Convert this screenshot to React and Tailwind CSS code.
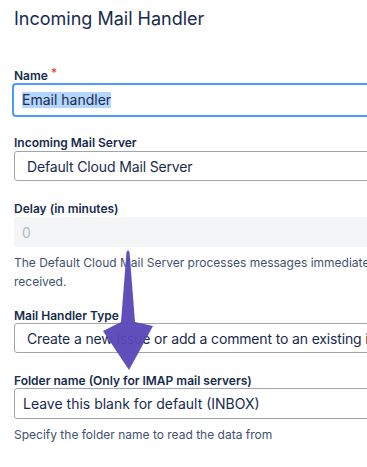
import React from 'react'

function Label({ children, required, className = '' }) {
  return (
    <div className={'flex items-start text-[12px] leading-[14px] font-semibold text-[#172b4d] ' + className}>
      <span>{children}</span>
      {required && <span className="ml-[3px] -mt-[3px] text-[#de350b] font-normal">*</span>}
    </div>
  )
}

function Arrow() {
  // big purple annotation arrow drawn over the form
  return (
    <svg className="absolute left-0 top-0 pointer-events-none" width="367" height="467" viewBox="0 0 367 467">
      <polygon
        points="128,250 129.5,252 135,322 153,326 129,370 103,331 121,322 126.5,252"
        fill="#5847b8"
        opacity="0.95"
      />
    </svg>
  )
}

export default function App() {
  return (
    <div className="relative w-[367px] h-[467px] overflow-hidden bg-white" style={{ fontFamily: 'Inter, "Liberation Sans", Arial, sans-serif' }}>
      <div className="w-[600px] pl-[14px]">
        <h1 className="pt-[5px] text-[18px] leading-[28px] text-[#172b4d] font-normal">Incoming Mail Handler</h1>

        <Label required className="mt-[36px]">Name</Label>
        <div className="-ml-[2px] h-[34px] border-2 border-[#4c9aff] rounded-[4px] flex items-center pl-[8px]">
          <span className="text-[14px] leading-[16px] text-[#172b4d] bg-[#b4d5fe]">Email handler</span>
        </div>

        <Label className="mt-[19px]">Incoming Mail Server</Label>
        <div className="mt-[1px] h-[30px] border border-[#a0a4ab] rounded-[3px] flex items-center pl-[12px] text-[14px] tracking-[-0.15px] text-[#172b4d]">
          Default Cloud Mail Server
        </div>

        <Label className="mt-[21px]">Delay (in minutes)</Label>
        <div className="mt-[1px] h-[30px] bg-[#f4f5f7] rounded-[3px] flex items-center pl-[8px] text-[14px] text-[#b3b9c4]">
          0
        </div>

        <p className="mt-[6px] text-[12px] leading-[19px] text-[#42526e] w-[480px]">
          The Default Cloud Mail Server processes messages immediately as they are received.
        </p>

        <Label className="mt-[18px]">Mail Handler Type</Label>
        <div className="h-[30px] border border-[#a0a4ab] rounded-[3px] flex items-center pl-[12px] text-[14px] tracking-[-0.15px] text-[#172b4d] whitespace-nowrap">
          Create a new issue or add a comment to an existing issue
        </div>

        <Label className="mt-[21px]">Folder name (Only for IMAP mail servers)</Label>
        <div className="h-[31px] border border-[#a0a4ab] rounded-[3px] flex items-center pl-[8px] text-[14px] text-[#172b4d]">
          Leave this blank for default (INBOX)
        </div>

        <p className="mt-[8px] text-[12px] leading-[16px] text-[#42526e]">Specify the folder name to read the data from</p>
      </div>
      <Arrow />
    </div>
  )
}
